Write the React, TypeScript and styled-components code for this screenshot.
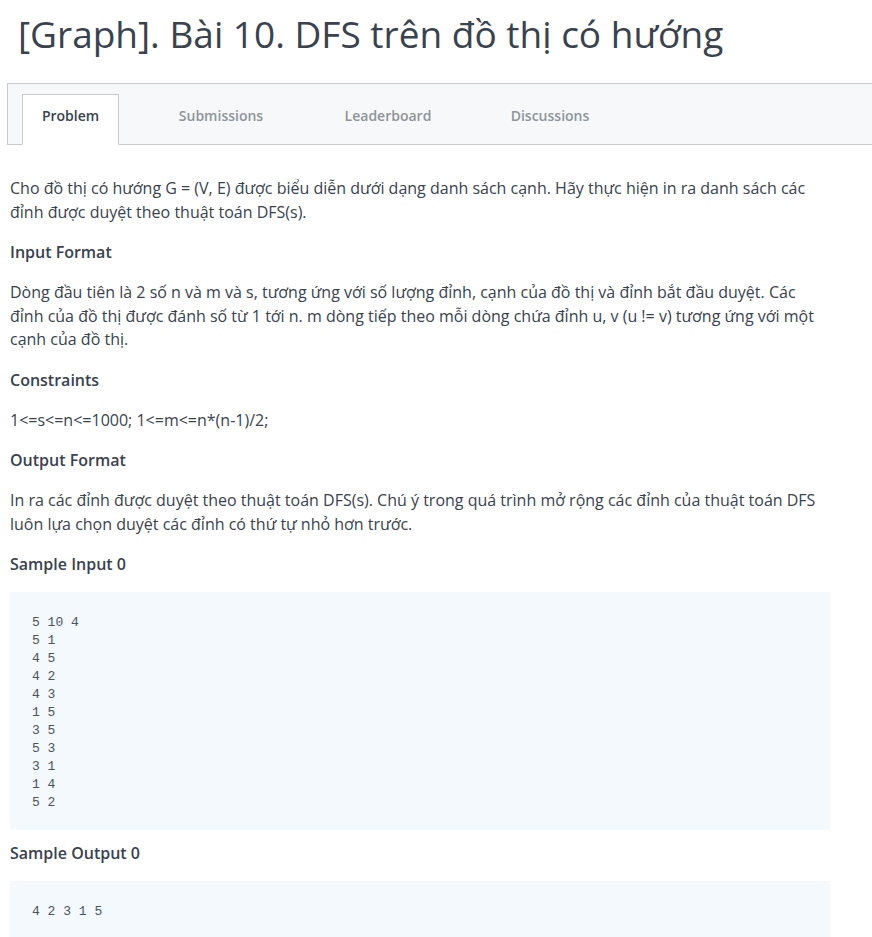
import React from "react";
import styled, { createGlobalStyle } from "styled-components";

const Global = createGlobalStyle`
  html, body { margin: 0; padding: 0; background: #ffffff; }
  body { font-family: "Open Sans", "Noto Sans", sans-serif; color: #39424e; }
`;

const Page = styled.div`
  width: 872px;
  overflow: hidden;
`;

const Title = styled.h1`
  margin: 0;
  padding: 10px 0 0 18px;
  font-size: 37px;
  font-weight: 400;
  line-height: 48px;
  color: #39424e;
  white-space: nowrap;
`;

const TabBar = styled.div`
  margin: 25px 0 0 7px;
  height: 60px;
  background: #f7f8fa;
  border: 1px solid #c8cbd0;
  border-right: none;
  display: flex;
  align-items: flex-end;
  padding-left: 14px;
`;

const Tab = styled.div<{ $active?: boolean; $w: number }>`
  box-sizing: border-box;
  width: ${(p) => p.$w}px;
  height: 51px;
  margin-bottom: -1px;
  padding-bottom: 8px;
  display: flex;
  align-items: center;
  justify-content: center;
  font-size: 14px;
  font-weight: 600;
  color: ${(p) => (p.$active ? "#39424e" : "#8e949b")};
  background: ${(p) => (p.$active ? "#ffffff" : "transparent")};
  border: 1px solid ${(p) => (p.$active ? "#c8cbd0" : "transparent")};
  border-bottom: 1px solid ${(p) => (p.$active ? "#ffffff" : "transparent")};
`;

const Content = styled.div`
  padding: 32px 42px 0 10px;
  font-size: 16px;
  line-height: 23.5px;
`;

const Para = styled.p`
  margin: 0 0 17px 0;
`;

const Heading = styled.h3`
  margin: 0 0 17px 0;
  font-size: 16px;
  font-weight: 600;
  line-height: 23px;
`;

const Code = styled.pre`
  margin: -1px 0 12px 0;
  background: #f4f9fd;
  padding: 22px 22px 18px 22px;
  font-family: "Liberation Mono", "DejaVu Sans Mono", monospace;
  font-size: 13px;
  line-height: 18px;
  color: #4a525c;
`;

const tabs = [
  { label: "Problem", w: 97, active: true },
  { label: "Submissions", w: 204 },
  { label: "Leaderboard", w: 130 },
  { label: "Discussions", w: 194 },
];

export default function App() {
  return (
    <Page>
      <Global />
      <Title>[Graph]. Bài 10. DFS trên đồ thị có hướng</Title>
      <TabBar>
        {tabs.map((t) => (
          <Tab key={t.label} $active={t.active} $w={t.w}>
            {t.label}
          </Tab>
        ))}
      </TabBar>
      <Content>
        <Para>
          Cho đồ thị có hướng G = (V, E) được biểu diễn dưới dạng danh sách cạnh. Hãy thực hiện in ra danh sách các đỉnh được duyệt theo thuật toán DFS(s).
        </Para>
        <Heading>Input Format</Heading>
        <Para>
          Dòng đầu tiên là 2 số n và m và s, tương ứng với số lượng đỉnh, cạnh của đồ thị và đỉnh bắt đầu duyệt. Các đỉnh của đồ thị được đánh số từ 1 tới n. m dòng tiếp theo mỗi dòng chứa đỉnh u, v (u != v) tương ứng với một cạnh của đồ thị.
        </Para>
        <Heading>Constraints</Heading>
        <Para>1&lt;=s&lt;=n&lt;=1000; 1&lt;=m&lt;=n*(n-1)/2;</Para>
        <Heading>Output Format</Heading>
        <Para>
          In ra các đỉnh được duyệt theo thuật toán DFS(s). Chú ý trong quá trình mở rộng các đỉnh của thuật toán DFS luôn lựa chọn duyệt các đỉnh có thứ tự nhỏ hơn trước.
        </Para>
        <Heading>Sample Input 0</Heading>
        <Code>{`5 10 4
5 1
4 5
4 2
4 3
1 5
3 5
5 3
3 1
1 4
5 2`}</Code>
        <Heading>Sample Output 0</Heading>
        <Code>{`4 2 3 1 5`}</Code>
      </Content>
    </Page>
  );
}
